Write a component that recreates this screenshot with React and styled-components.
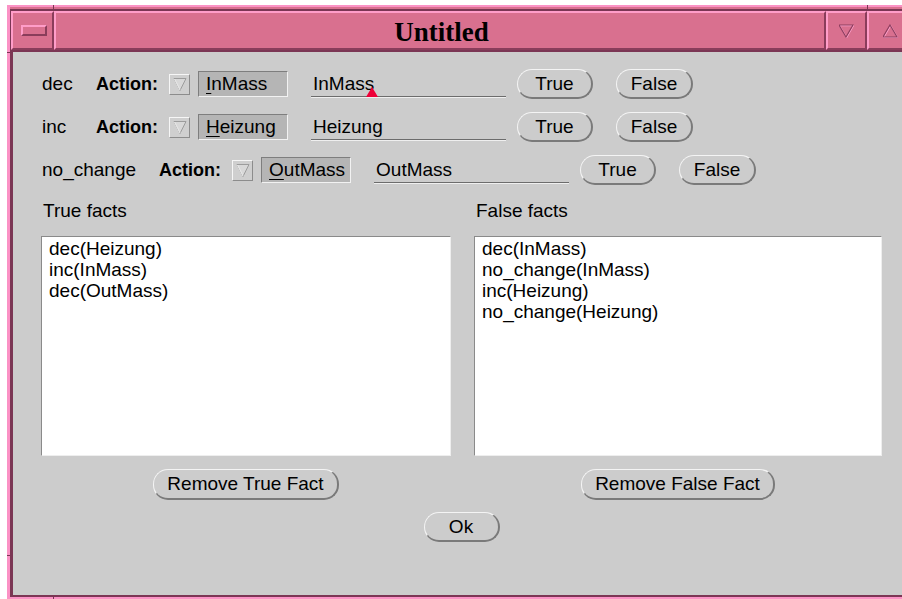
import React from 'react';
import styled, { createGlobalStyle } from 'styled-components';

const GlobalStyle = createGlobalStyle`
	html, body {
		margin: 0;
		background: #fff;
		overflow: hidden;
	}
	body {
		font-family: "Liberation Sans", Arial, sans-serif;
		color: #000;
	}
`;

// Window frame
const Window = styled.div`
	position: relative;
	box-sizing: border-box;
	width: 904px;
	height: 594px;
	margin: 5px 0 0 7px;
	padding-top: 2px;
	background: #d8708f;
	border-top: 2px solid #fb92c5;
	border-left: 3px solid #fb92c5;
	border-bottom: 2px solid #fb92c5;
`;

// small resize-corner marks cut into the frame
const Tick = styled.span`
	position: absolute;
	background: #7b3654;
	left: ${(p) => p.$x}px;
	top: ${(p) => p.$y}px;
	width: ${(p) => p.$w}px;
	height: ${(p) => p.$h}px;
`;

const TitleBar = styled.div`
	display: flex;
	height: 39px;
	padding-right: 3px;
	border-top: 2px solid #7b3654;
	border-bottom: 2px solid #7b3654;
	border-left: 1px solid #7b3654;
`;

const TitleSeg = styled.div`
	box-sizing: border-box;
	display: flex;
	align-items: center;
	justify-content: center;
	width: ${(p) => p.$w}px;
	flex: ${(p) => (p.$grow ? 1 : 'none')};
	height: 39px;
	background: #d9708f;
	border: 2px solid;
	border-color: #ff9dc9 #8a3d5b #8a3d5b #ff9dc9;
`;

const Title = styled.span`
	font-family: "Liberation Serif", "Times New Roman", serif;
	font-weight: 700;
	font-size: 27px;
	line-height: 30px;
	padding-top: 2px;
	padding-left: 3px;
`;

const CloseMark = styled.span`
	box-sizing: border-box;
	width: 26px;
	height: 11px;
	margin-left: 2px;
	border: 2px solid;
	border-color: #ff9dc9 #8a3d5b #8a3d5b #ff9dc9;
`;

const Pane = styled.div`
	box-sizing: border-box;
	height: 545px;
	padding: 18px 0 0 28px;
	background: #cccccc;
	border-left: 3px solid #7b3654;
	border-bottom: 2px solid #7b3654;
`;

// Action rows
const Rows = styled.div`
	display: flex;
	flex-direction: column;
	gap: 15px;
`;

const Row = styled.div`
	display: flex;
	align-items: center;
	height: 28px;
	padding-left: 1px;
	font-size: 19px;
`;

const RowLabel = styled.span`
	min-width: 31px;
	margin-right: 23px;
`;

const ActionLabel = styled.span`
	font-weight: 700;
	font-size: 18px;
	margin-right: 11px;
`;

const MenuMark = styled.span`
	box-sizing: border-box;
	display: flex;
	width: 21px;
	height: 21px;
	margin-right: 8px;
	background: #cfcfcf;
	border: 1px solid;
	border-color: #f6f6f6 #8c8c8c #8c8c8c #f6f6f6;
`;

const AbbrevField = styled.span`
	box-sizing: border-box;
	width: 90px;
	height: 26px;
	margin-right: 23px;
	padding-left: 7px;
	line-height: 24px;
	background: #b5b5b5;
	border: 1px solid;
	border-color: #7e7e7e #f2f2f2 #f2f2f2 #7e7e7e;
	white-space: nowrap;
`;

const Mnemonic = styled.span`
	text-decoration: underline;
	text-underline-offset: 3px;
`;

const TextField = styled.div`
	box-sizing: border-box;
	width: 195px;
	height: 26px;
	margin-right: 11px;
	padding-left: 2px;
	line-height: 25px;
	border-bottom: 1px solid #6c6c6c;
	box-shadow: 0 1px 0 #efefef;
	white-space: nowrap;
`;

// insert point caret
const Caret = styled.span`
	position: relative;
	display: inline-block;
	width: 0;
	height: 0;

	&::after {
		content: '';
		position: absolute;
		left: -8px;
		top: -3px;
		border-left: 6px solid transparent;
		border-right: 6px solid transparent;
		border-bottom: 10px solid #ee0038;
	}
`;

const Button = styled.button`
	box-sizing: border-box;
	height: 30px;
	min-width: ${(p) => p.$min || 76}px;
	margin-right: ${(p) => p.$gap || 0}px;
	padding: 0 13px;
	background: #cccccc;
	border: solid;
	border-width: 1px 2px 2px 1px;
	border-color: #f4f4f4 #7a7a7a #7a7a7a #f4f4f4;
	border-radius: 15px;
	font-family: "Liberation Sans", Arial, sans-serif;
	font-size: 19px;
	color: #000;
	white-space: nowrap;
`;

// Fact lists
const Columns = styled.div`
	display: grid;
	grid-template-columns: 410px 408px;
	column-gap: 23px;
	margin-top: 16px;
`;

const Column = styled.div`
	display: flex;
	flex-direction: column;
`;

const ColumnHead = styled.div`
	height: 22px;
	line-height: 22px;
	padding-left: 2px;
	margin-bottom: 14px;
	font-size: 19px;
`;

const FactList = styled.div`
	box-sizing: border-box;
	height: 220px;
	padding: 1px 7px;
	background: #fff;
	border: 1px solid;
	border-color: #8a8a8a #eeeeee #eeeeee #8a8a8a;
	font-size: 19px;
	line-height: 21px;
`;

const ListButton = styled(Button)`
	align-self: center;
	margin-top: 13px;
	height: 31px;
`;

const OkRow = styled.div`
	display: flex;
	justify-content: center;
	width: 841px;
	margin-top: 12px;
`;

const actions = [
	{ name: 'dec', field: 'InMass', caret: true },
	{ name: 'inc', field: 'Heizung' },
	{ name: 'no_change', field: 'OutMass' },
];

const trueFacts = ['dec(Heizung)', 'inc(InMass)', 'dec(OutMass)'];
const falseFacts = ['dec(InMass)', 'no_change(InMass)', 'inc(Heizung)', 'no_change(Heizung)'];

function MenuTriangle() {
	return (
		<svg width="19" height="19" viewBox="0 0 19 19">
			<polygon points="4,3.5 16,3.5 10,15.5" fill="#d8d8d8" stroke="#9c9c9c" strokeWidth="1" />
			<line x1="4.5" y1="4" x2="10" y2="15" stroke="#f4f4f4" strokeWidth="1" />
		</svg>
	);
}

function FrameTriangle({ up }) {
	const pts = up ? '7,1 14,13 0,13' : '0,1 14,1 7,13';
	return (
		<svg width="15" height="14" viewBox="0 0 15 14" style={{ marginLeft: up ? 6 : 0 }}>
			<polygon points={pts} fill="none" stroke="#ffa3cd" strokeWidth="1.2" transform="translate(0.6 0.6)" />
			<polygon points={pts} fill="none" stroke="#8e3e5e" strokeWidth="1.2" />
		</svg>
	);
}

function ActionRow({ name, field, caret }) {
	return (
		<Row>
			<RowLabel>{name}</RowLabel>
			<ActionLabel>Action:</ActionLabel>
			<MenuMark>
				<MenuTriangle />
			</MenuMark>
			<AbbrevField>
				<Mnemonic>{field[0]}</Mnemonic>
				{field.slice(1)}
			</AbbrevField>
			<TextField>
				{field}
				{caret && <Caret />}
			</TextField>
			<Button $gap={23}>True</Button>
			<Button $min={77}>False</Button>
		</Row>
	);
}

export default function App() {
	return (
		<>
			<GlobalStyle />
			<Window>
				<Tick $x={-3} $y={45} $w={3} $h={1} />
				<Tick $x={-3} $y={548} $w={3} $h={1} />
				<Tick $x={43} $y={-2} $w={1} $h={4} />
				<Tick $x={857} $y={-2} $w={1} $h={4} />
				<Tick $x={43} $y={590} $w={1} $h={2} />
				<TitleBar>
					<TitleSeg $w={43}>
						<CloseMark />
					</TitleSeg>
					<TitleSeg $grow>
						<Title>Untitled</Title>
					</TitleSeg>
					<TitleSeg $w={41}>
						<FrameTriangle />
					</TitleSeg>
					<TitleSeg $w={41}>
						<FrameTriangle up />
					</TitleSeg>
				</TitleBar>
				<Pane>
					<Rows>
						{actions.map((a) => (
							<ActionRow key={a.name} {...a} />
						))}
					</Rows>
					<Columns>
						<Column>
							<ColumnHead>True facts</ColumnHead>
							<FactList>
								{trueFacts.map((f) => (
									<div key={f}>{f}</div>
								))}
							</FactList>
							<ListButton>Remove True Fact</ListButton>
						</Column>
						<Column>
							<ColumnHead>False facts</ColumnHead>
							<FactList>
								{falseFacts.map((f) => (
									<div key={f}>{f}</div>
								))}
							</FactList>
							<ListButton>Remove False Fact</ListButton>
						</Column>
					</Columns>
					<OkRow>
						<Button>Ok</Button>
					</OkRow>
				</Pane>
			</Window>
		</>
	);
}
